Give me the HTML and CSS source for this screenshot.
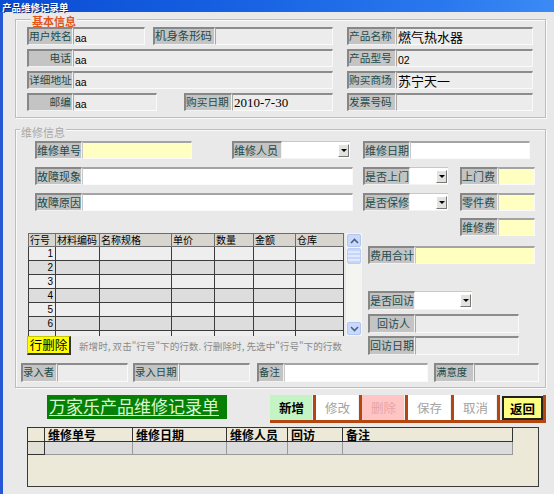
FILE: index.html
```html
<!DOCTYPE html>
<html lang="zh-CN">
<head>
    <meta charset="UTF-8">
    <title>产品维修记录单</title>
    <link rel="stylesheet" href="styles.css">
</head>
<body>
<div class="window">
    <div class="titlebar">产品维修记录单</div>
    <div class="frame">

        <!-- 基本信息 -->
        <div class="group basic">
            <div class="legend">基本信息</div>
            <div class="row">
                <div class="lbl w46">用户姓名</div>
                <div class="fld w72">aa</div>
                <div class="lbl w62 ml8 wide">机身条形码</div>
                <div class="fld w118"></div>
                <div class="lbl w49 ml14">产品名称</div>
                <div class="fld w137 cn">燃气热水器</div>
            </div>
            <div class="row">
                <div class="lbl w46 right">电话</div>
                <div class="fld w260">aa</div>
                <div class="lbl w49 ml14">产品型号</div>
                <div class="fld w137">02</div>
            </div>
            <div class="row">
                <div class="lbl w46">详细地址</div>
                <div class="fld w260">aa</div>
                <div class="lbl w49 ml14">购买商场</div>
                <div class="fld w137 cn">苏宁天一</div>
            </div>
            <div class="row">
                <div class="lbl w46 right">邮编</div>
                <div class="fld w84">aa</div>
                <div class="lbl w48 ml27">购买日期</div>
                <div class="fld w101 date">2010-7-30</div>
                <div class="lbl w49 ml14">发票号码</div>
                <div class="fld w137"></div>
            </div>
        </div>

        <!-- 维修信息 -->
        <div class="group repair">
            <div class="legend dim">维修信息</div>
            <div class="row r-a">
                <div class="lbl w47">维修单号</div>
                <div class="fld yellow w110"></div>
                <div class="lbl w50 ml40">维修人员</div>
                <div class="combo w68"><span class="drop"></span></div>
                <div class="lbl w47 ml13">维修日期</div>
                <div class="fld white w120"></div>
            </div>
            <div class="row r-b">
                <div class="lbl w47">故障现象</div>
                <div class="fld white w271"></div>
                <div class="lbl w47 ml10">是否上门</div>
                <div class="combo w38"><span class="drop"></span></div>
                <div class="lbl w38 ml12">上门费</div>
                <div class="fld yellow w37"></div>
            </div>
            <div class="row r-b">
                <div class="lbl w47">故障原因</div>
                <div class="fld white w271"></div>
                <div class="lbl w47 ml10">是否保修</div>
                <div class="combo w38"><span class="drop"></span></div>
                <div class="lbl w38 ml12">零件费</div>
                <div class="fld yellow w37"></div>
            </div>
            <div class="row r-d">
                <div class="lbl w38">维修费</div>
                <div class="fld yellow w37"></div>
            </div>

            <div class="lower">
                <div class="lower-left">
                    <div class="tbl-wrap">
                        <table class="parts">
                            <thead>
                                <tr>
                                    <th class="c-no">行号</th>
                                    <th class="c-code">材料编码</th>
                                    <th class="c-name">名称规格</th>
                                    <th class="c-price">单价</th>
                                    <th class="c-qty">数量</th>
                                    <th class="c-amt">金额</th>
                                    <th class="c-store">仓库</th>
                                </tr>
                            </thead>
                            <tbody>
                                <tr><td class="num">1</td><td></td><td></td><td></td><td></td><td></td><td></td></tr>
                                <tr><td class="num">2</td><td></td><td></td><td></td><td></td><td></td><td></td></tr>
                                <tr><td class="num">3</td><td></td><td></td><td></td><td></td><td></td><td></td></tr>
                                <tr><td class="num">4</td><td></td><td></td><td></td><td></td><td></td><td></td></tr>
                                <tr><td class="num">5</td><td></td><td></td><td></td><td></td><td></td><td></td></tr>
                                <tr><td class="num">6</td><td></td><td></td><td></td><td></td><td></td><td></td></tr>
                                <tr><td class="num"></td><td></td><td></td><td></td><td></td><td></td><td></td></tr>
                            </tbody>
                        </table>
                        <div class="vscroll">
                            <div class="sb-btn">
                                <svg width="9" height="6" viewBox="0 0 9 6"><polyline points="1,5 4.5,1.5 8,5" fill="none" stroke="#4d6185" stroke-width="1.6"/></svg>
                            </div>
                            <div class="sb-thumb"></div>
                            <div class="sb-space"></div>
                            <div class="sb-btn">
                                <svg width="9" height="6" viewBox="0 0 9 6"><polyline points="1,1 4.5,4.5 8,1" fill="none" stroke="#4d6185" stroke-width="1.6"/></svg>
                            </div>
                        </div>
                    </div>
                    <div class="hint-row">
                        <div class="row-del">行删除</div>
                        <div class="hint">新增时, 双击"行号"下的行数. 行删除时, 先选中"行号"下的行数</div>
                    </div>
                </div>
                <div class="lower-right">
                    <div class="row total">
                        <div class="lbl w47">费用合计</div>
                        <div class="fld yellow w120"></div>
                    </div>
                    <div class="row visit">
                        <div class="lbl w47">是否回访</div>
                        <div class="combo w57"><span class="drop"></span></div>
                    </div>
                    <div class="row visitor">
                        <div class="lbl w47 center">回访人</div>
                        <div class="fld w104"></div>
                    </div>
                    <div class="row visit-date">
                        <div class="lbl w47">回访日期</div>
                        <div class="fld w104"></div>
                    </div>
                </div>
            </div>

            <div class="row r-foot">
                <div class="lbl small w36">录入者</div>
                <div class="fld w71"></div>
                <div class="lbl small w46 ml5">录入日期</div>
                <div class="fld w71"></div>
                <div class="lbl small w27 ml7">备注</div>
                <div class="fld white w144"></div>
                <div class="lbl small w40 ml6">满意度</div>
                <div class="fld w65"></div>
            </div>
        </div>

        <!-- 标题与按钮 -->
        <div class="actions">
            <div class="banner">万家乐产品维修记录单</div>
            <div class="btn-bar">
                <div class="btn add">新增</div>
                <div class="btn off">修改</div>
                <div class="btn del">删除</div>
                <div class="btn off">保存</div>
                <div class="btn off">取消</div>
                <div class="btn back"><span>返回</span></div>
            </div>
        </div>

        <!-- 记录列表 -->
        <div class="list">
            <table class="records">
                <tr class="head">
                    <td class="sel"></td>
                    <td class="l-no">维修单号</td>
                    <td class="l-date">维修日期</td>
                    <td class="l-man">维修人员</td>
                    <td class="l-visit">回访</td>
                    <td class="l-note">备注</td>
                </tr>
                <tr class="data">
                    <td class="sel"></td>
                    <td></td>
                    <td></td>
                    <td></td>
                    <td></td>
                    <td></td>
                </tr>
            </table>
        </div>
    </div>
</div>
</body>
</html>
```

FILE: styles.css
```css
* {
    box-sizing: border-box;
}

body {
    margin: 0;
    background-color: #e9e9e9;
    font-family: "Noto Sans CJK SC", sans-serif;
    font-size: 11px;
    color: #000;
}

.window {
    width: 554px;
    height: 494px;
    overflow: hidden;
    background-color: #e9e9e9;
}

.titlebar {
    height: 12px;
    padding: 1px 0 0 2px;
    background: linear-gradient(to right, #0a4cd2, #1660e2 40%, #2a78ee 80%, #3b8af4);
    color: #fff;
    font-weight: bold;
    font-size: 9.5px;
    line-height: 12px;
    text-shadow: 1px 1px 0 #0a2a7c;
}

.frame {
    height: 482px;
    padding: 7px 0 0 12px;
    border-left: 3px solid #2458d4;
}

/* group boxes */
.group {
    width: 531px;
    border: 1px solid #bdbdbd;
    box-shadow: inset 1px 1px 0 #fafafa, 1px 1px 0 #fafafa;
}

.legend {
    width: fit-content;
    height: 12px;
    margin: -7px 0 0 4px;
    padding: 0 1px;
    background-color: #e9e9e9;
    font-size: 11px;
    line-height: 12px;
    font-weight: bold;
    color: #e0561c;
}

.legend.dim {
    font-weight: normal;
    color: #aaa;
}

.basic {
    padding: 2px 0 2px 11px;
}

.repair {
    margin-top: 11px;
    padding: 3px 0 5px 0;
}

.row {
    display: flex;
    height: 18px;
    margin-bottom: 4px;
}

/* label & field boxes */
.lbl {
    flex: none;
    height: 100%;
    padding-left: 0;
    background-color: #c4c4c4;
    border-top: 2px solid #878787;
    border-left: 2px solid #878787;
    border-right: 1px solid #f2f2f2;
    border-bottom: 1px solid #f2f2f2;
    color: #1d4b4b;
    font-size: 10.7px;
    line-height: 13px;
    white-space: nowrap;
    overflow: hidden;
}

.lbl.wide {
    font-size: 11.4px;
}

.lbl.right {
    text-align: right;
    padding-right: 1px;
}

.lbl.center {
    text-align: right;
    padding-right: 4px;
}

.lbl.small {
    font-size: 10.4px;
}

.fld {
    flex: none;
    height: 100%;
    padding: 4px 0 0 1px;
    background-color: #ececec;
    border-top: 2px solid #8c8c8c;
    border-left: 1px solid #a8a8a8;
    border-right: 1px solid #fafafa;
    border-bottom: 1px solid #fafafa;
    font-family: "Liberation Sans", Arial, sans-serif;
    font-size: 10.5px;
    line-height: 11px;
    white-space: nowrap;
    overflow: hidden;
}

.fld.cn {
    padding-top: 0;
    font-family: "Noto Sans CJK SC", sans-serif;
    font-size: 13px;
    line-height: 15px;
}

.fld.date {
    padding-top: 1px;
    font-family: "Liberation Serif", serif;
    font-size: 13px;
    line-height: 14px;
}

.fld.white {
    background-color: #fff;
    border-top: 2px solid #a4a4a4;
    border-left: 1px solid #c8c8c8;
}

.fld.yellow {
    background-color: #ffffc2;
    border-top: 2px solid #a4a4a4;
    border-left: 1px solid #c8c8c8;
}

.combo {
    flex: none;
    display: flex;
    justify-content: flex-end;
    align-items: center;
    height: 100%;
    padding-right: 1px;
    background-color: #fff;
    border-top: 1px solid #c8c8c8;
    border-bottom: 1px solid #f4f4f4;
}

.drop {
    display: flex;
    justify-content: center;
    align-items: center;
    width: 11px;
    height: 13px;
    background-color: #e2e2de;
    border-top: 1px solid #fff;
    border-left: 1px solid #fff;
    border-right: 1px solid #777;
    border-bottom: 1px solid #777;
}

.drop::after {
    content: "";
    border-left: 3px solid transparent;
    border-right: 3px solid transparent;
    border-top: 3px solid #000;
}

/* widths and spacing */
.w27 { width: 27px; }
.w36 { width: 36px; }
.w37 { width: 37px; }
.w38 { width: 38px; }
.w40 { width: 40px; }
.w46 { width: 46px; }
.w47 { width: 47px; }
.w48 { width: 48px; }
.w49 { width: 49px; }
.w50 { width: 50px; }
.w57 { width: 57px; }
.w62 { width: 62px; }
.w65 { width: 65px; }
.w68 { width: 68px; }
.w71 { width: 71px; }
.w72 { width: 72px; }
.w84 { width: 84px; }
.w101 { width: 101px; }
.w104 { width: 104px; }
.w110 { width: 110px; }
.w118 { width: 118px; }
.w120 { width: 120px; }
.w137 { width: 137px; }
.w144 { width: 144px; }
.w260 { width: 260px; }
.w271 { width: 271px; }

.ml5 { margin-left: 5px; }
.ml6 { margin-left: 6px; }
.ml7 { margin-left: 7px; }
.ml8 { margin-left: 8px; }
.ml10 { margin-left: 10px; }
.ml12 { margin-left: 12px; }
.ml13 { margin-left: 13px; }
.ml14 { margin-left: 14px; }
.ml27 { margin-left: 27px; }
.ml40 { margin-left: 40px; }

/* repair rows */
.repair .row .lbl {
    font-size: 11px;
    line-height: 14px;
}

.repair .row .lbl.small {
    font-size: 10.4px;
    line-height: 13px;
}

.r-a {
    margin: 3px 0 0 19px;
}

.r-b {
    margin: 8px 0 0 19px;
}

.r-d {
    margin: 7px 0 -3px 444px;
}

.lower {
    display: flex;
    margin-left: 12px;
}

.tbl-wrap {
    display: flex;
    width: 334px;
    height: 103px;
    overflow: hidden;
}

.parts {
    flex: none;
    align-self: flex-start;
    width: 315px;
    border-collapse: collapse;
    table-layout: fixed;
    border: 1px solid #3c3c3c;
    font-size: 10px;
}

.parts th,
.parts td {
    height: 14px;
    padding: 0 1px;
    border: 1px solid #3c3c3c;
    line-height: 12px;
    font-weight: normal;
    text-align: left;
    white-space: nowrap;
    overflow: hidden;
}

.parts th {
    height: 13px;
    background-color: #d8d5cf;
    border-color: #6d6d6d;
}

.parts tbody tr:nth-child(odd) td {
    background-color: #eeeeee;
}

.parts tbody tr:nth-child(even) td {
    background-color: #dddddd;
}

.parts td.num {
    text-align: right;
    padding-right: 2px;
    font-family: "Liberation Sans", Arial, sans-serif;
}

.c-no { width: 27px; }
.c-code { width: 44px; }
.c-name { width: 72px; }
.c-price { width: 43px; }
.c-qty { width: 39px; }
.c-amt { width: 42px; }
.c-store { width: 48px; }

.vscroll {
    display: flex;
    flex-direction: column;
    width: 17px;
    margin-left: 2px;
    padding: 1px;
    background-color: #f4f4f1;
}

.sb-btn {
    display: flex;
    justify-content: center;
    align-items: center;
    height: 13px;
    background-color: #c9d8fb;
    border: 1px solid #b3c6f2;
    border-radius: 2px;
}

.sb-thumb {
    height: 16px;
    margin-top: 1px;
    background: repeating-linear-gradient(#c6d6fa 0 2px, #e1e9fd 2px 4px);
    border: 1px solid #bccdf4;
    border-radius: 2px;
}

.sb-space {
    flex: 1;
}

.hint-row {
    display: flex;
    align-items: center;
    height: 19px;
}

.row-del {
    flex: none;
    width: 44px;
    height: 19px;
    margin-left: -1px;
    background-color: #ffff00;
    border-top: 1px solid #c8c800;
    border-left: 1px solid #c8c800;
    border-right: 2px solid #333;
    border-bottom: 2px solid #333;
    font-size: 12.5px;
    line-height: 15px;
    text-align: center;
}

.hint {
    margin-left: 8px;
    color: #8a8a8a;
    font-size: 9.6px;
    white-space: nowrap;
}

.lower-right {
    margin-left: 6px;
}

.lower-right .row {
    margin-bottom: 0;
}

.total {
    margin-top: 13px;
}

.visit {
    height: 19px !important;
    margin-top: 27px;
}

.visitor {
    height: 19px !important;
    margin-top: 4px;
}

.visit-date {
    height: 19px !important;
    margin-top: 3px;
}

.r-foot {
    height: 19px;
    margin: 8px 0 0 5px;
}

/* banner + buttons */
.actions {
    display: flex;
    margin-top: 7px;
}

.banner {
    width: 180px;
    height: 24px;
    margin-left: 32px;
    padding-left: 2px;
    background-color: #058005;
    color: #d8f8d0;
    font-size: 17px;
    line-height: 22px;
    text-decoration: underline;
    text-underline-offset: 2px;
    text-decoration-thickness: 1px;
    white-space: nowrap;
}

.btn-bar {
    display: flex;
    margin-left: 43px;
}

.btn {
    display: flex;
    justify-content: center;
    align-items: center;
    width: 46px;
    height: 28px;
    background-color: #fff;
    border-right: 3px solid #b4470f;
    border-bottom: 3px solid #b4470f;
    box-shadow: inset -1px 0 0 #f0f0f0;
    font-size: 12.5px;
}

.btn.add {
    background-color: #c4f4c4;
    font-weight: bold;
}

.btn.off {
    color: #a4a4a4;
}

.btn.del {
    background-color: #ffc4c4;
    color: #e8a4a4;
}

.btn.back {
    padding: 1px 0 0 2px;
    background-color: transparent;
}

.btn.back span {
    display: flex;
    justify-content: center;
    align-items: center;
    width: 100%;
    height: 100%;
    background-color: #ffff80;
    border: 2px solid #222;
    font-weight: bold;
}

/* record list */
.list {
    width: 512px;
    height: 60px;
    margin: 4px 0 0 12px;
    background-color: #ece9d8;
    border: 1px solid #3a3a3a;
}

.records {
    border-collapse: collapse;
    table-layout: fixed;
    width: 485px;
    margin: -1px 0 0 -1px;
}

.records td {
    padding: 0 0 0 3px;
    border: 1px solid #333;
    white-space: nowrap;
}

.records .head td {
    height: 14px;
    font-weight: bold;
    font-size: 12px;
    line-height: 13px;
    vertical-align: bottom;
}

.records .data td {
    height: 13px;
    background-color: #dcdcdc;
    border-color: #9a9a9a;
}

.records .data td.sel {
    background-color: #e2dfd4;
    border-color: #333;
}

.sel { width: 17px; }
.l-no { width: 88px; }
.l-date { width: 94px; }
.l-man { width: 61px; }
.l-visit { width: 55px; }
.l-note { width: 170px; }
```
